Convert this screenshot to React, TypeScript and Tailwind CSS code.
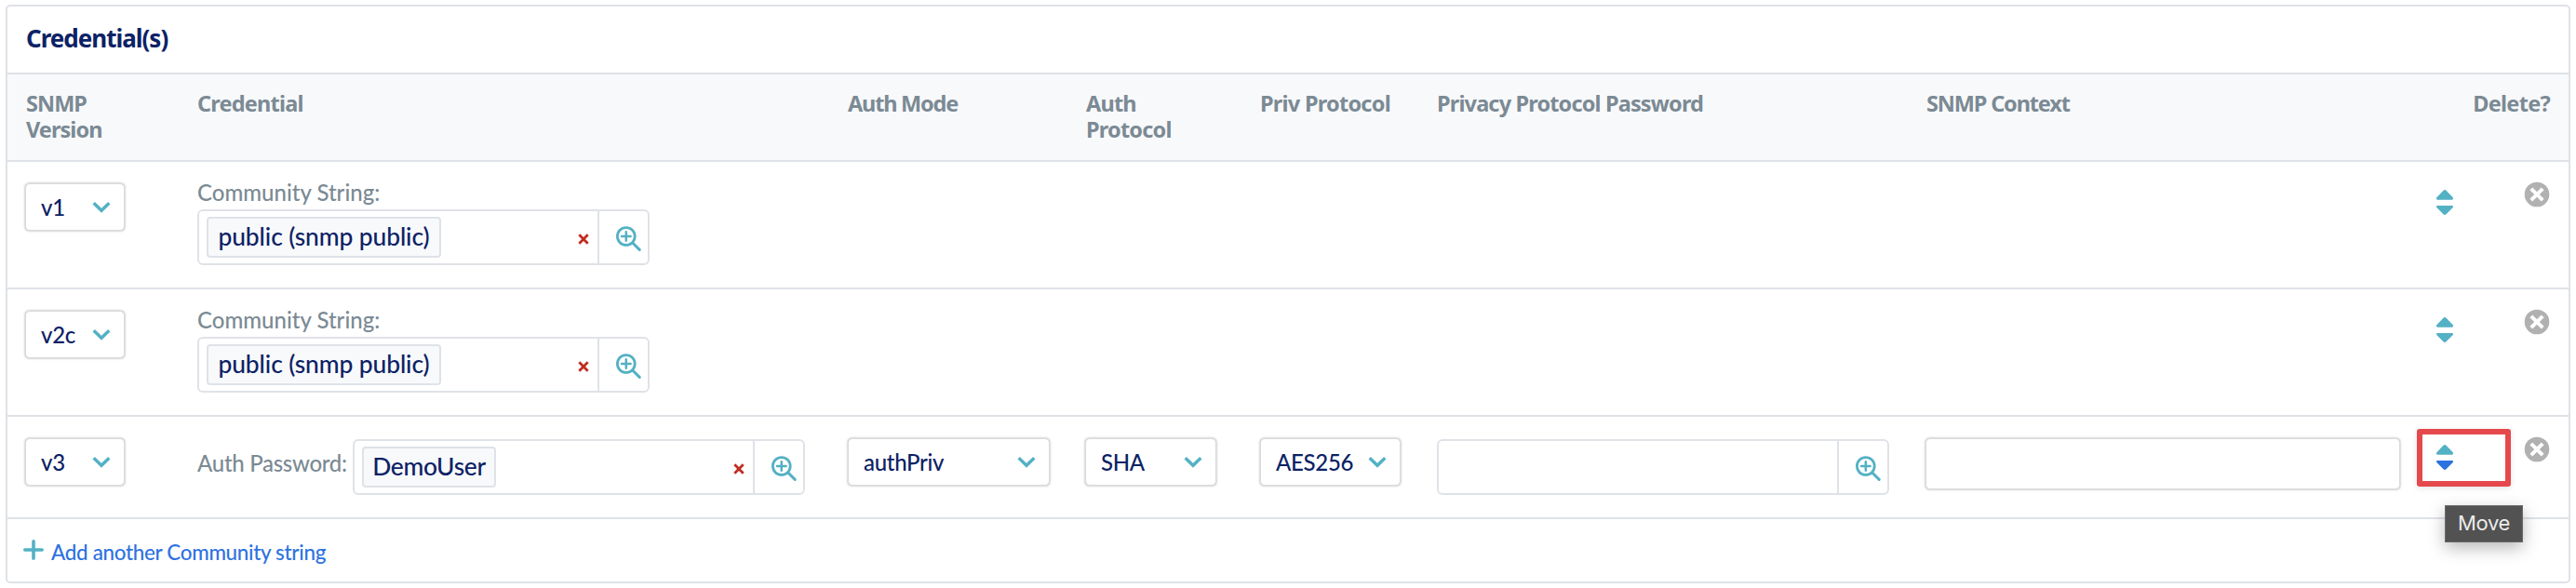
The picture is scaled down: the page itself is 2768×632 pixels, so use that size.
import React from "react";

const grid = "grid grid-cols-[204px_699px_255px_188px_190px_525px_528px_163px] items-start";

function Chevron() {
  return (
    <svg className="ml-auto h-[13px] w-[20px] shrink-0" viewBox="0 0 20 13" fill="none">
      <path d="M1.7 2.2 10 10.3l8.3-8.1" stroke="#53b1c4" strokeWidth="3.4" />
    </svg>
  );
}

function Select({ value, width }: { value: string; width: string }) {
  return (
    <div
      className={`mt-[23px] flex h-[51px] items-center rounded-[5px] border border-[#dadada] bg-white pr-[14px] pl-[16px] text-[24px] leading-none font-medium text-[#0c2265] shadow-[0_0_2px_0.5px_rgba(0,0,0,0.16)] ${width}`}
    >
      <span className="tracking-[-0.3px] whitespace-nowrap">{value}</span>
      <Chevron />
    </div>
  );
}

function ZoomIcon() {
  return (
    <svg className="h-[27px] w-[27px]" viewBox="0 0 27 27" fill="none" stroke="#53b1c4" strokeLinecap="round">
      <circle cx="10.8" cy="11" r="9.4" strokeWidth="2.8" />
      <path d="M10.8 6.2v9.6M6 11h9.6" strokeWidth="2.5" />
      <path d="m18 18.2 7.2 7.2" strokeWidth="3" />
    </svg>
  );
}

function Lookup({ value, chip = "" }: { value?: string; chip?: string }) {
  return (
    <div className="flex h-[60px] w-[486px] rounded-[6px] border-2 border-[#dfe2e7] bg-white">
      <div className="flex flex-1 items-center pr-[9px] pl-[8px]">
        {value && (
          <>
            <span
              className={`flex h-[44px] items-center justify-center rounded-[4px] border-2 border-[#dfe2e7] bg-[#f8f9fb] pb-[1px] text-[26.4px] leading-none font-medium whitespace-nowrap text-[#0c2265] ${chip}`}
            >
              {value}
            </span>
            <svg className="mt-[4px] ml-auto h-[12px] w-[12px]" viewBox="0 0 12 12">
              <path d="m1.3 1.3 9.4 9.4M10.7 1.3l-9.4 9.4" stroke="#c02d20" strokeWidth="2.8" />
            </svg>
          </>
        )}
      </div>
      <div className="flex w-[54px] justify-end border-l-2 border-[#dfe2e7] pt-[16px] pr-[7px]">
        <ZoomIcon />
      </div>
    </div>
  );
}

function Actions({ active = false }: { active?: boolean }) {
  return (
    <div className="relative flex justify-between pr-[20px] pl-[21px]">
      <svg className="mt-[30px] h-[27px] w-[18px]" viewBox="0 0 18 27">
        <path d="M9 0q.8 0 1.500.7l7 7.300q.5.600.5 1.300 0 1.500-1.500 1.500H1.500Q0 10.800 0 9.300 0 8.600.5 8l7-7.300Q8.200 0 9 0Z" fill="#53b1c4" />
        <path
          d="M9 27q.8 0 1.500-.7l7-7q.5-.6.5-1.300 0-1-1-1H1q-1 0-1 1 0 .7.5 1.300l7 7q.7.7 1.500.7Z"
          fill={active ? "#2e72e0" : "#53b1c4"}
        />
      </svg>
      <svg className="mt-[21px] h-[28px] w-[28px]" viewBox="0 0 28 28">
        <circle cx="14" cy="14" r="13.300" fill="#b1b1b1" />
        <path d="m7.800 7.800 12.400 12.400M20.200 7.800 7.800 20.200" stroke="#fff" strokeWidth="4" />
      </svg>
      {active && (
        <>
          <div className="absolute top-[13px] left-0 h-[62px] w-[101px] rounded-[3px] border-[6px] border-[#e5494d] shadow-[0_2px_6px_rgba(0,0,0,0.1)]" />
          <div className="absolute top-[95px] left-[30px] flex h-[40px] w-[84px] items-center justify-center border border-[#6b6b6b] bg-[#525252] pb-[2px] font-[Inter] text-[22px] leading-none tracking-[-0.4px] text-[#ececec] shadow-[0_6px_18px_rgba(0,0,0,0.28)]">
            Move
          </div>
        </>
      )}
    </div>
  );
}

function CommunityRow({ version }: { version: string }) {
  return (
    <div className={`${grid} h-[137px] border-b-2 border-[#dfe2e7]`}>
      <div className="pl-[19px]">
        <Select value={version} width="w-[107px]" />
      </div>
      <div className="pt-[19px]">
        <div className="mb-[4px] text-[24px] leading-[28px] font-medium text-[#7b8a94]">Community String:</div>
        <Lookup value="public (snmp public)" chip="w-[252px] tracking-[-0.1px]" />
      </div>
      <div />
      <div />
      <div />
      <div />
      <div />
      <Actions />
    </div>
  );
}

export default function App() {
  return (
    <div className="h-[632px] w-[2768px] bg-white pt-[5px] pl-[6px] font-[Lato,sans-serif]">
      <div className="h-[622px] w-[2756px] rounded-[5px] border-2 border-[#dfe2e7]">
        <div className="flex h-[73px] items-center border-b-2 border-[#dfe2e7] pb-[3px] pl-[20px] font-['Noto_Sans'] text-[26px] font-bold tracking-[-1px] text-[#0c2265]">
          Credential(s)
        </div>
        <div
          className={`${grid} h-[94px] border-b-2 border-[#dfe2e7] bg-[#f8f9fb] pt-[17px] font-['Noto_Sans'] text-[23.5px] leading-[28px] font-bold whitespace-nowrap text-[#7b8a94]`}
        >
          <div className="pl-[20px] tracking-[-0.95px]">
            SNMP
            <br />
            Version
          </div>
          <div className="tracking-[-0.8px]">Credential</div>
          <div className="tracking-[-1.2px]">Auth Mode</div>
          <div className="pl-px tracking-[-0.8px]">
            Auth
            <br />
            Protocol
          </div>
          <div className="tracking-[-0.75px]">Priv Protocol</div>
          <div className="tracking-[-0.85px]">Privacy Protocol Password</div>
          <div className="pl-px tracking-[-1.15px]">SNMP Context</div>
          <div className="pr-[20px] text-right tracking-[-0.7px]">Delete?</div>
        </div>

        <CommunityRow version="v1" />
        <CommunityRow version="v2c" />

        <div className={`${grid} h-[110px] border-b-2 border-[#dfe2e7]`}>
          <div className="pl-[19px]">
            <Select value="v3" width="w-[107px]" />
          </div>
          <div className="flex pt-[24px]">
            <div className="w-[167px] pt-[12px] text-[24px] leading-[28px] font-medium tracking-[-0.3px] text-[#7b8a94]">Auth Password:</div>
            <Lookup value="DemoUser" chip="w-[144px] tracking-[-0.3px]" />
          </div>
          <Select value="authPriv" width="w-[217px]" />
          <Select value="SHA" width="w-[141px]" />
          <Select value="AES256" width="w-[151px]" />
          <div className="pt-[24px]">
            <Lookup />
          </div>
          <div className="mt-[23px] h-[55px] w-[510px] rounded-[5px] border border-[#dadada] bg-white shadow-[0_0_2px_0.5px_rgba(0,0,0,0.16)]" />
          <Actions active />
        </div>

        <div className="flex pt-[22px] pl-[17px]">
          <svg className="h-[22px] w-[22px]" viewBox="0 0 22 22" stroke="#53b1c4" strokeWidth="3.6" strokeLinecap="round">
            <path d="M11 1.8v18.4M1.8 11h18.4" />
          </svg>
          <span className="ml-[8px] text-[22.4px] leading-[28px] font-medium tracking-[-0.3px] text-[#2e72e0]">Add another Community string</span>
        </div>
      </div>
    </div>
  );
}
